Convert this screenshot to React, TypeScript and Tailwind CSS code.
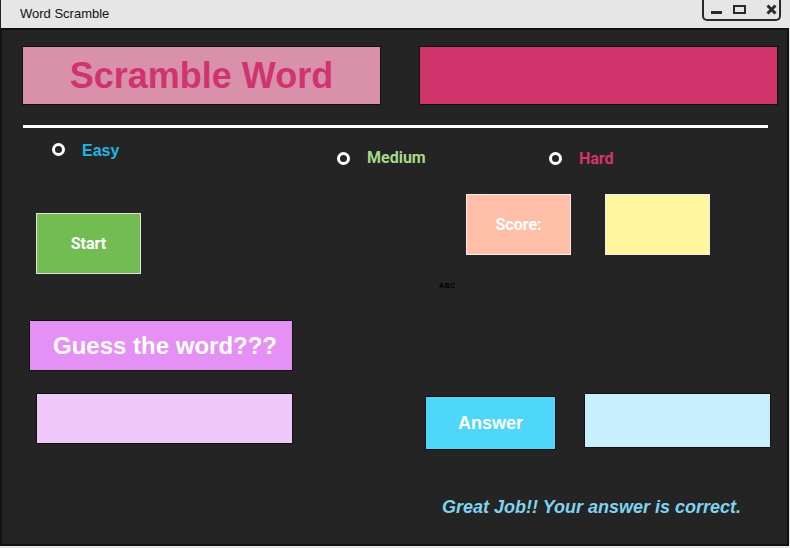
import React from "react";

const arial = { fontFamily: '"Liberation Sans", Arial, sans-serif' };
const roboto = { fontFamily: 'Roboto, "Liberation Sans", sans-serif' };

function Radio() {
  return <div className="w-[13px] h-[13px] rounded-full border-[3px] border-white shrink-0" />;
}

export default function App() {
  return (
    <div className="w-[790px] h-[548px] bg-[#e6e6e6] flex flex-col overflow-hidden" style={arial}>
      {/* Title bar */}
      <div className="h-[28px] flex items-start justify-between border-l border-[#222] shrink-0">
        <div className="pl-[19px] pt-[6px] text-[13px] leading-[16px] text-[#111]">Word Scramble</div>
        <div className="mr-[9px] w-[79px] h-[21px] border-2 border-t-0 border-[#2a2a2a] rounded-b-[5px] flex items-center pl-[7px] gap-[11px]">
          <div className="w-[11px] h-[3px] bg-[#2a2a2a] mt-[6px]" />
          <div className="w-[13px] h-[9px] border-2 border-[#2a2a2a]" />
          <svg width="11" height="11" viewBox="0 0 11 11" className="ml-[9px]">
            <path d="M1.5 1.5 L9.5 9.5 M9.5 1.5 L1.5 9.5" stroke="#2a2a2a" strokeWidth="3" />
          </svg>
        </div>
      </div>

      {/* Content */}
      <div className="w-[789px] h-[518px] bg-[#242424] border-2 border-[#111] flex flex-col shrink-0">
        {/* Row 1 */}
        <div className="mt-[16px] pl-[20px] flex gap-[38px]">
          <div className="w-[359px] h-[59px] bg-[#d891a9] border border-[#111] flex items-center justify-center">
            <span className="text-[36px] font-bold text-[#cf3470] leading-none">Scramble Word</span>
          </div>
          <div className="w-[359px] h-[59px] bg-[#cf356b] border border-[#111]" />
        </div>

        {/* Line */}
        <div className="mt-[20px] ml-[21px] w-[745px] h-[3px] bg-white" />

        {/* Radios */}
        <div className="mt-[13px] h-[22px] flex items-start">
          <div className="ml-[50px] w-[285px] flex items-center gap-[17px]">
            <Radio />
            <span className="text-[16px] font-bold text-[#22b5e6] leading-[14px] mt-[3px]">Easy</span>
          </div>
          <div className="mt-[10px] w-[212px] flex items-center gap-[17px]" style={roboto}>
            <Radio />
            <span className="text-[16px] font-bold text-[#a6d98a] leading-[14px]">Medium</span>
          </div>
          <div className="mt-[10px] flex items-center gap-[17px]" style={roboto}>
            <Radio />
            <span className="text-[16px] font-bold text-[#d6336d] leading-[14px] mt-[1px]">Hard</span>
          </div>
        </div>

        {/* Row D */}
        <div className="mt-[31px] h-[79px] flex items-start" style={roboto}>
          <div className="ml-[34px] mt-[19px] w-[105px] h-[61px] bg-[#72bc52] border border-[#e0e0e0] flex items-center justify-center">
            <span className="text-[16px] font-bold text-white">Start</span>
          </div>
          <div className="ml-[325px] w-[105px] h-[61px] bg-[#ffbfa9] border border-[#eeeeee] flex items-center justify-center">
            <span className="text-[16px] font-bold text-white">Score:</span>
          </div>
          <div className="ml-[34px] w-[105px] h-[61px] bg-[#fff69d] border border-[#eeeeee]" />
        </div>

        {/* ABC */}
        <div className="mt-[9px] ml-[437px] h-[7px] text-[7px] leading-[7px] font-bold text-black tracking-[0.5px]">ABC</div>

        {/* Guess */}
        <div className="mt-[31px] ml-[27px] w-[264px] h-[51px] bg-[#e590f4] border border-[#111] flex items-center pl-[23px]">
          <span className="text-[24px] font-bold text-white leading-none">Guess the word???</span>
        </div>

        {/* Row E */}
        <div className="mt-[22px] h-[56px] flex items-start">
          <div className="ml-[34px] w-[257px] h-[51px] bg-[#f0c8fa] border border-[#111]" />
          <div className="ml-[132px] mt-[3px] w-[131px] h-[54px] bg-[#4ed7fa] border border-[#111] flex items-center justify-center">
            <span className="text-[18px] font-bold text-white">Answer</span>
          </div>
          <div className="ml-[28px] w-[187px] h-[55px] bg-[#c8effd] border border-[#111]" />
        </div>

        {/* Message */}
        <div className="mt-[47px] ml-[440px] text-[18px] leading-[22px] font-bold italic text-[#80d3f0]">
          Great Job!! Your answer is correct.
        </div>
      </div>
    </div>
  );
}
